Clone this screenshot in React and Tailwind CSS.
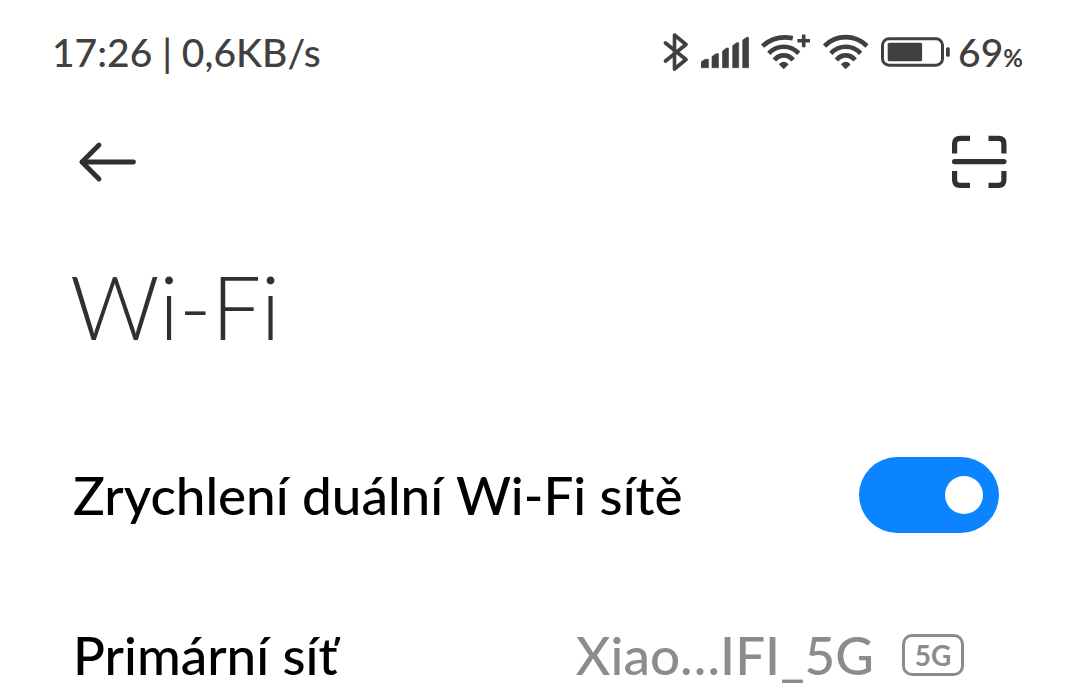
import { useState } from "react";

const BARS = [
  "M0 35.7V30L4 27.3H7.5V35.7Z",
  "M11 35.7V24.5L15 21.7H17.5V35.7Z",
  "M21.5 35.7V19L25.5 16H27.5V35.7Z",
  "M31.7 35.7V13.5L35.7 10.7H37.7V35.7Z",
  "M41.7 35.7V8L45.7 5.3H47.7V35.7Z",
];

function BluetoothIcon() {
  return (
    <svg width="26" height="40" viewBox="0 0 26 40" fill="none" stroke="currentColor" strokeWidth="3.6" strokeLinecap="round" strokeLinejoin="round" aria-hidden="true">
      <path d="M2.5 11L23 27.5L11.5 37V3L23 12.5L2.5 29" />
    </svg>
  );
}

function SignalIcon() {
  return (
    <svg width="48" height="40" viewBox="0 0 48 40" fill="currentColor" stroke="currentColor" strokeWidth="0.6" strokeLinejoin="round" aria-hidden="true">
      {BARS.map((d) => (
        <path key={d} d={d} />
      ))}
    </svg>
  );
}

function WifiIcon({ plus }) {
  return (
    <svg width={plus ? 50 : 46} height="40" viewBox={plus ? "0 0 50 40" : "0 0 46 40"} fill="none" stroke="currentColor" strokeWidth="4.6" aria-hidden="true">
      {/* outer arc is cut short when the plus sits next to it */}
      <path d={plus ? "M1.5 14C9 7.5 19 3.5 31.8 6.3" : "M1.5 14C13.5 2.2 32 2.2 44 14"} />
      <path d="M7.8 21.3C16.3 12.5 29.2 12.5 37.7 21.3" />
      <path d="M13.4 28C18.5 21.8 27 21.8 32.1 28" />
      <path d="M18 32.4C20.5 29 25 29 27.5 32.4L22.7 37.2Z" fill="currentColor" stroke="none" />
      {plus && <path d="M36.4 8.8H49M42.7 2.4V15.2" strokeWidth="3.6" />}
    </svg>
  );
}

function BatteryIcon() {
  return (
    <svg width="69" height="40" viewBox="0 0 69 40" fill="currentColor" aria-hidden="true">
      <rect x="1.5" y="6.8" width="60" height="26.4" rx="6.5" fill="none" stroke="currentColor" strokeWidth="3" />
      <rect x="6.7" y="10.8" width="34.4" height="18.4" rx="1.5" />
      <rect x="65" y="15.3" width="3.8" height="9.4" rx="1.5" />
    </svg>
  );
}

function StatusBar() {
  return (
    <div className="flex h-[104px] items-center justify-between pr-[54px] pl-[52px] text-[39px] leading-[48px] font-medium text-[#404040]">
      <span>17:26 | 0,6KB/s</span>
      <div className="flex items-center">
        <div className="flex items-center gap-3">
          <BluetoothIcon />
          <SignalIcon />
          <WifiIcon plus />
          <WifiIcon />
          <BatteryIcon />
        </div>
        <div className="ml-2 flex items-baseline">
          <span>69</span>
          <span className="text-[24px] leading-none font-bold">%</span>
        </div>
      </div>
    </div>
  );
}

function Header() {
  return (
    <div className="flex h-[116px] items-center justify-between pr-[70px] pl-[78px] text-[#303030]">
      <button type="button" aria-label="Zpět">
        <svg width="60" height="54" viewBox="0 0 60 54" fill="none" stroke="currentColor" strokeWidth="4.8" strokeLinecap="round" strokeLinejoin="round">
          <path d="M21 10L4 27L21 44" />
          <path d="M4 27H55.5" />
        </svg>
      </button>
      <button type="button" aria-label="Skenovat">
        <svg width="56" height="54" viewBox="0 0 56 54" fill="none" stroke="currentColor" strokeWidth="5.2">
          <path d="M3.6 18.5V8.5Q3.6 3.3 9 3.3H19M37.5 3.3H47.5Q52.9 3.3 52.9 8.5V18.5" />
          <path d="M3.6 36V45Q3.6 50.3 9 50.3H19M37.5 50.3H47.5Q52.9 50.3 52.9 45V36" />
          <path d="M3.6 26.6H52.9" strokeLinecap="round" />
        </svg>
      </button>
    </div>
  );
}

export default function App() {
  const [dual, setDual] = useState(true);

  return (
    <div className="overflow-hidden bg-white font-['Lato','Noto_Sans',sans-serif]">
      <StatusBar />
      <Header />

      <main>
        <h1 className="pt-[30px] pb-[95px] pl-[70px] text-[88px] leading-[112px] font-light text-[#303030]">Wi-Fi</h1>

        <div className="flex flex-col gap-[86px] pl-[73px] text-[53px] leading-[72px] font-medium text-black">
          <div className="flex items-center justify-between pr-[78px]">
            <label htmlFor="dual">Zrychlení duální Wi-Fi sítě</label>
            <input
              id="dual"
              type="checkbox"
              role="switch"
              checked={dual}
              onChange={(e) => setDual(e.target.checked)}
              className="flex h-[76px] w-[140px] shrink-0 cursor-pointer appearance-none items-center rounded-full bg-gray-300 px-4 before:size-[38px] before:rounded-full before:bg-white checked:justify-end checked:bg-[#0d84ff]"
            />
          </div>

          <button type="button" className="flex h-[72px] items-center justify-between pr-[113px] text-left">
            <span>Primární síť</span>
            <span className="flex items-center gap-7 text-[#8c8c8c]">
              <span>Xiao…IFI_5G</span>
              <span className="flex h-[42px] w-[62px] items-center justify-center rounded-[10px] border-3 border-current text-[28px] leading-none font-bold">
                5G
              </span>
            </span>
          </button>
        </div>
      </main>
    </div>
  );
}
